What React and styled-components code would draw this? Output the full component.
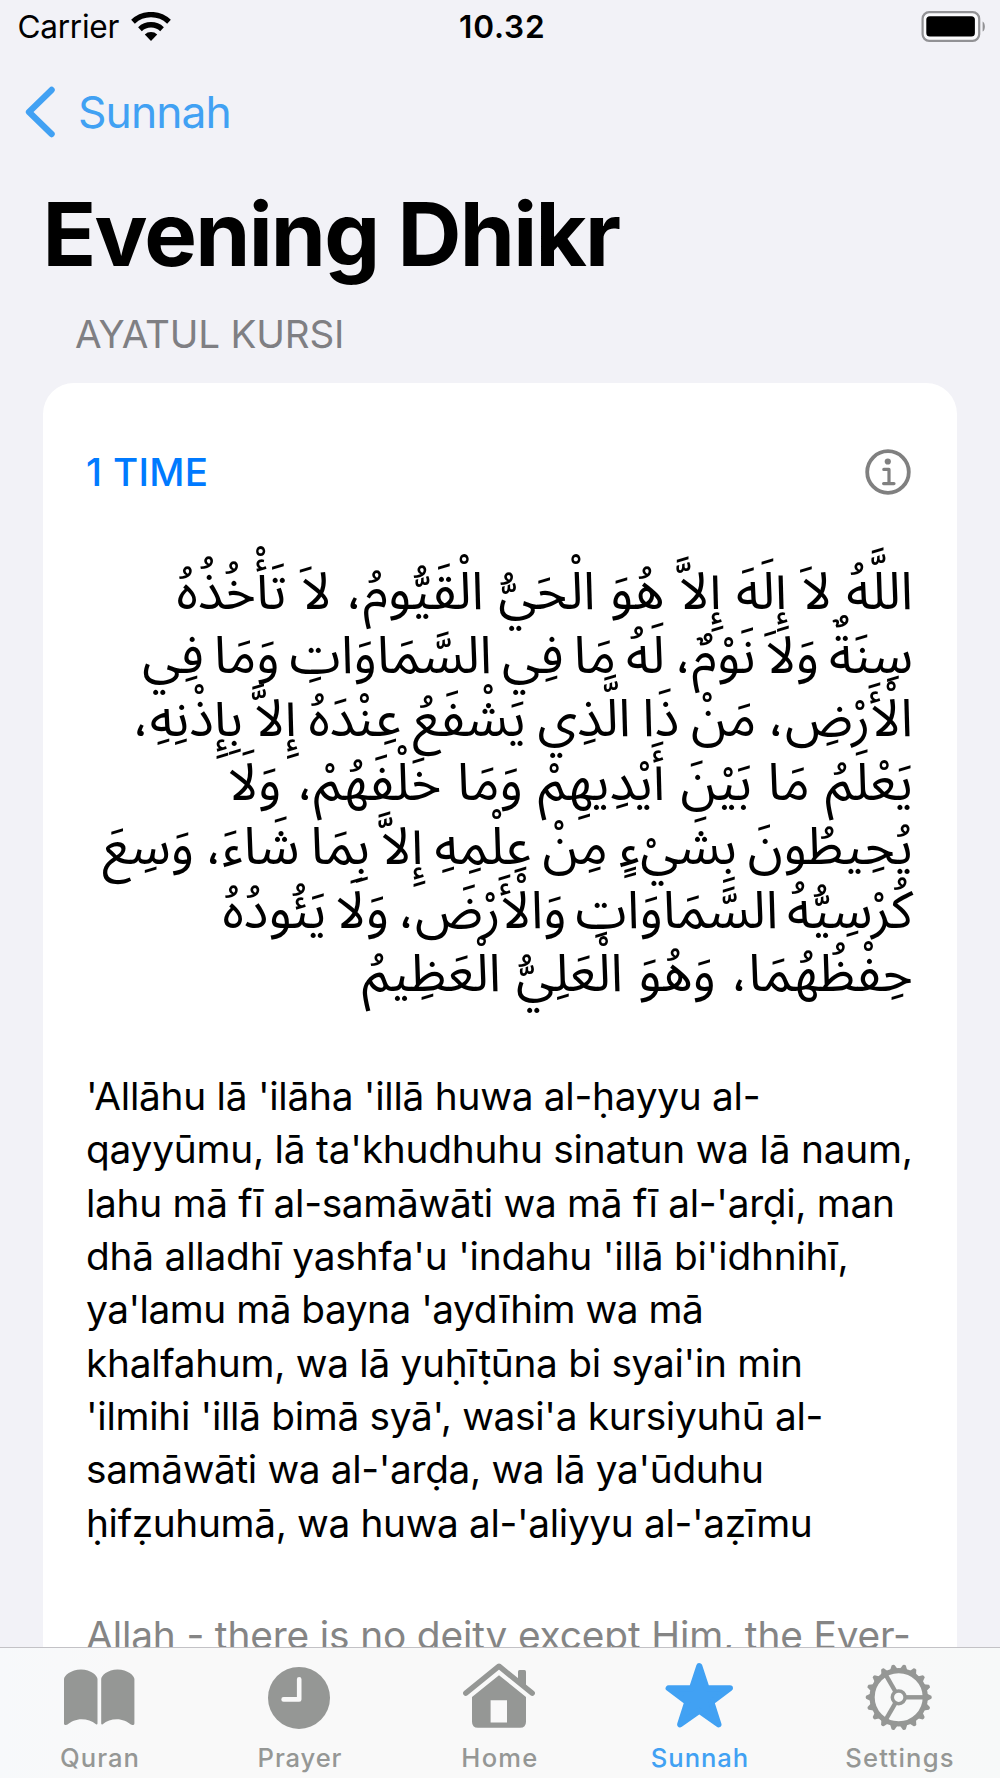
import React, { useLayoutEffect, useRef, useState } from "react";
import styled, { createGlobalStyle } from "styled-components";

const GlobalStyle = createGlobalStyle`
  * { box-sizing: border-box; }
  body {
    margin: 0;
    background: #f2f2f7;
    font-family: Inter, "Liberation Sans", sans-serif;
    color: #000;
  }
`;

const Screen = styled.div`
  display: flex;
  flex-direction: column;
  width: 1000px;
  height: 1778px;
  overflow: hidden;
  background: #f2f2f7;
`;

const StatusBar = styled.header`
  display: grid;
  grid-template-columns: 1fr auto 1fr;
  align-items: center;
  flex: none;
  height: 53px;
  padding: 0 13px 0 17.5px;
`;

const StatusLeft = styled.div`
  display: flex;
  align-items: center;
  gap: 12px;
`;

const StatusRight = styled.div`
  display: flex;
  justify-content: flex-end;
`;

const StatusText = styled.span`
  font-size: 31.6px;
  line-height: 38px;
  font-weight: ${(p) => (p.$strong ? 600 : 400)};
  padding-top: 1px;
`;

const BackLink = styled.a`
  display: flex;
  align-items: center;
  flex: none;
  gap: 22px;
  height: 117px;
  padding-left: 24px;
  color: #41a1f3;
  font-size: 44.4px;
`;

const Title = styled.h1`
  flex: none;
  margin: 0;
  padding-left: 42.5px;
  height: 131px;
  font-size: 88.6px;
  line-height: 128px;
  font-weight: 700;
`;

const SectionLabel = styled.h2`
  flex: none;
  margin: 0;
  padding-left: 75px;
  height: 82px;
  font-size: 38.6px;
  line-height: 66px;
  font-weight: 400;
  color: #7f7f83;
`;

const Content = styled.main`
  display: flex;
  flex-direction: column;
  flex: 1;
  min-height: 0;
  overflow: hidden;
`;

const Card = styled.section`
  flex: none;
  margin: 0 43px;
  padding: 62px 46px 60px 43px;
  border-radius: 31px;
  background: #fff;
`;

const CardHeader = styled.div`
  display: flex;
  align-items: center;
  justify-content: space-between;
  height: 53px;
`;

const Count = styled.span`
  font-size: 38.6px;
  font-weight: 500;
  color: #007aff;
`;

const ArabicVerse = styled.div`
  direction: rtl;
  margin: 63px -2px 0 0;
  font-family: "Noto Sans Arabic", "DejaVu Sans", sans-serif;
  font-size: 52px;
  line-height: 63.7px;
`;

const Paragraph = styled.div`
  margin-top: ${(p) => p.$gap}px;
  font-size: 38.8px;
  line-height: 53.33px;
  color: ${(p) => (p.$muted ? "#858585" : "#000")};
`;

const Line = styled.div`
  width: max-content;
  white-space: pre;
`;

const TabBar = styled.nav`
  display: grid;
  grid-template-columns: repeat(5, 1fr);
  flex: none;
  height: 131.5px;
  border-top: 1.5px solid #c3c2c6;
  background: linear-gradient(90deg, #f7f9fb 0%, #f9f9f9 12%, #f9f9f9 80%, #f7f9f9 100%);
`;

const Tab = styled.a`
  display: flex;
  flex-direction: column;
  align-items: center;
  padding-top: 10px;
  color: ${(p) => (p.$active ? "#41a1f3" : "#959795")};
`;

const TabIcon = styled.svg`
  display: block;
  width: 80px;
  height: 76px;
`;

const TabLabel = styled.span`
  margin-top: 8px;
  font-size: 25.6px;
  line-height: 32px;
  font-weight: 500;
`;

const Glyph = styled.svg`
  display: block;
  flex: none;
`;

/* Tracks a single line of text so that its ink spans exactly `ink` pixels. */
function Fit({ text, ink, as = "span" }) {
  const ref = useRef(null);
  const [style, setStyle] = useState(undefined);
  useLayoutEffect(() => {
    const cs = getComputedStyle(ref.current);
    const ctx = document.createElement("canvas").getContext("2d");
    ctx.font = `${cs.fontWeight} ${cs.fontSize} ${cs.fontFamily}`;
    ctx.direction = cs.direction;
    ctx.textAlign = "left";
    const m = ctx.measureText(text);
    const extra = ink - (m.actualBoundingBoxLeft + m.actualBoundingBoxRight);
    if (cs.direction === "rtl") {
      setStyle({ wordSpacing: `${extra / (text.split(" ").length - 1)}px` });
    } else {
      setStyle({ letterSpacing: `${extra / (text.length - 1)}px` });
    }
  }, [text, ink]);
  return (
    <Line as={as === "span" ? "span" : undefined} ref={ref} style={style}>
      {text}
    </Line>
  );
}

const arabic = [
  ["اللَّهُ لاَ إِلَهَ إِلاَّ هُوَ الْحَيُّ الْقَيُّومُ، لاَ تَأْخُذُهُ", 732],
  ["سِنَةٌ وَلاَ نَوْمٌ، لَهُ مَا فِي السَّمَاوَاتِ وَمَا فِي", 768],
  ["الْأَرْضِ، مَنْ ذَا الَّذِي يَشْفَعُ عِنْدَهُ إِلاَّ بِإِذْنِهِ،", 773],
  ["يَعْلَمُ مَا بَيْنَ أَيْدِيهِمْ وَمَا خَلْفَهُمْ، وَلَا", 681],
  ["يُحِيطُونَ بِشَيْءٍ مِنْ عِلْمِهِ إِلاَّ بِمَا شَاءَ، وَسِعَ", 808],
  ["كُرْسِيُّهُ السَّمَاوَاتِ وَالْأَرْضَ، وَلَا يَئُودُهُ", 690],
  ["حِفْظُهُمَا، وَهُوَ الْعَلِيُّ الْعَظِيمُ", 549],
];

const latin = [
  ["'Allāhu lā 'ilāha 'illā huwa al-ḥayyu al-", 669.7],
  ["qayyūmu, lā ta'khudhuhu sinatun wa lā naum,", 822.7],
  ["lahu mā fī al-samāwāti wa mā fī al-'arḍi, man", 804],
  ["dhā alladhī yashfa'u 'indahu 'illā bi'idhnihī,", 758.5],
  ["ya'lamu mā bayna 'aydīhim wa mā", 614],
  ["khalfahum, wa lā yuḥīṭūna bi syai'in min", 712],
  ["'ilmihi 'illā bimā syā', wasi'a kursiyuhū al-", 732.5],
  ["samāwāti wa al-'arḍa, wa lā ya'ūduhu", 673],
  ["ḥifẓuhumā, wa huwa al-'aliyyu al-'aẓīmu", 721.8],
];

const arc = (r) => {
  const dx = r * 0.682;
  const dy = r * 0.731;
  return `M${20 - dx} ${29 - dy}A${r} ${r} 0 0 1 ${20 + dx} ${29 - dy}`;
};

const WifiIcon = () => (
  <Glyph width="40" height="30" viewBox="0 0 40 30" fill="none" stroke="#000" strokeWidth="5.4">
    <path d={arc(26.4)} />
    <path d={arc(16.2)} />
    <path d="M20 29L13.8 22.6A9 9 0 0 1 26.2 22.6Z" fill="#000" stroke="none" />
  </Glyph>
);

const BatteryIcon = () => (
  <Glyph width="66" height="32" viewBox="0 0 66 32">
    <rect x="1.6" y="1.2" width="56.6" height="28.6" rx="6.5" fill="#fafafc" stroke="#929295" strokeWidth="2.2" />
    <rect x="5.3" y="5.2" width="48.6" height="20.4" rx="3.6" />
    <path d="M61.6 10.4C64.6 11.6 64.6 19.4 61.6 20.6Z" fill="#929295" />
  </Glyph>
);

const ChevronIcon = () => (
  <Glyph width="32" height="54" viewBox="0 0 32 54" fill="none" stroke="currentColor" strokeWidth="6.3" strokeLinecap="round" strokeLinejoin="round">
    <path d="M27.6 4.9L5 27L27.6 49.1" />
  </Glyph>
);

const InfoIcon = () => (
  <Glyph width="46" height="46" viewBox="0 0 46 46" fill="none" stroke="#808080" strokeWidth="3.8">
    <circle cx="23" cy="23" r="20.8" />
    <circle cx="22.8" cy="12.5" r="3.1" fill="#808080" stroke="none" />
    <path d="M18.8 20.4H24V34.6M18.6 34.6H29" strokeWidth="3.2" strokeLinecap="round" strokeLinejoin="round" />
  </Glyph>
);

const BookIcon = () => (
  <TabIcon viewBox="0 0 80 76" fill="currentColor">
    <path d="M4 21C4 18 11 11.6 21 11.6S37.5 18 37.5 21V65.5C37.5 66.5 36.6 66.8 36 66.2C32 63 27 61.2 21.5 61.2C16 61.2 11 63.5 7.5 66.6C6 67.6 4 67 4 65.5Z" />
    <path d="M41.2 21C41.2 18 47.6 11.6 57.6 11.6S74.4 18 74.4 21V65.5C74.4 67 72.4 67.6 70.9 66.6C67.4 63.5 62.4 61.2 56.9 61.2C51.4 61.2 46.6 63 42.7 66.2C42.1 66.8 41.2 66.5 41.2 65.5Z" />
  </TabIcon>
);

const ClockIcon = () => (
  <TabIcon viewBox="0 0 80 76">
    <circle cx="39" cy="39.9" r="31" fill="currentColor" />
    <path d="M39.2 21.2V41.4H23.6" fill="none" stroke="#f9f9f9" strokeWidth="4.6" strokeLinecap="round" strokeLinejoin="round" />
  </TabIcon>
);

const HomeIcon = () => (
  <TabIcon viewBox="0 0 80 76" fill="currentColor">
    <path d="M5.8 35.2L39 8.2L72.2 35.2" fill="none" stroke="currentColor" strokeWidth="5.4" strokeLinecap="round" strokeLinejoin="round" />
    <path d="M58 24V13.5Q58 12 59.5 12H64.5Q66 12 66 13.5V30Z" />
    <path fillRule="evenodd" d="M12 39L39 17.2L66 39V63.7Q66 69.7 60 69.7H18Q12 69.7 12 63.7ZM30.6 42.2V64.6H47V42.2Z" />
  </TabIcon>
);

const StarIcon = () => (
  <TabIcon viewBox="0 0 80 76" fill="currentColor" stroke="currentColor" strokeWidth="6" strokeLinejoin="round">
    <path d="M39.3 8L46.6 30.2H70L51.4 44.2L58.5 66.4L39.3 52.8L20.1 66.4L27.2 44.2L8.6 30.2H32Z" />
  </TabIcon>
);

const GearIcon = () => (
  <TabIcon viewBox="0 0 80 76">
    <g transform="translate(38.7 39.3)" fill="none" stroke="currentColor">
      <circle r="26.6" strokeWidth="5.2" />
      <circle r="6.4" strokeWidth="3.5" />
      {[0, 120, 240].map((a) => (
        <path key={a} d="M7 0H25" strokeWidth="4.4" transform={`rotate(${a})`} />
      ))}
      {Array.from({ length: 18 }, (_, i) => (
        <path key={i} d="M28 -3.8L32.6 -1.5Q33.6 0 32.6 1.5L28 3.8Z" fill="currentColor" stroke="none" transform={`rotate(${i * 20})`} />
      ))}
    </g>
  </TabIcon>
);

const tabs = [
  { label: "Quran", Icon: BookIcon, ink: 76.5 },
  { label: "Prayer", Icon: ClockIcon, ink: 82 },
  { label: "Home", Icon: HomeIcon, ink: 73 },
  { label: "Sunnah", Icon: StarIcon, ink: 95, active: true },
  { label: "Settings", Icon: GearIcon, ink: 106.5 },
];

export default function App() {
  return (
    <>
      <GlobalStyle />
      <Screen>
        <StatusBar>
          <StatusLeft>
            <StatusText><Fit text="Carrier" ink={101} /></StatusText>
            <WifiIcon />
          </StatusLeft>
          <StatusText $strong><Fit text="10.32" ink={83} /></StatusText>
          <StatusRight><BatteryIcon /></StatusRight>
        </StatusBar>
        <Content>
          <BackLink>
            <ChevronIcon />
            <Fit text="Sunnah" ink={148.5} />
          </BackLink>
          <Title><Fit text="Evening Dhikr" ink={572.5} /></Title>
          <SectionLabel><Fit text="AYATUL KURSI" ink={266} /></SectionLabel>
          <Card>
            <CardHeader>
              <Count><Fit text="1 TIME" ink={118.7} /></Count>
              <InfoIcon />
            </CardHeader>
            <ArabicVerse lang="ar">
              {arabic.map(([t, w]) => <Fit key={t} as="div" text={t} ink={w} />)}
            </ArabicVerse>
            <Paragraph $gap={62}>
              {latin.map(([t, w]) => <Fit key={t} as="div" text={t} ink={w} />)}
            </Paragraph>
            <Paragraph $gap={59} $muted>
              <Fit as="div" text="Allah - there is no deity except Him, the Ever-" ink={823} />
            </Paragraph>
          </Card>
        </Content>
        <TabBar>
          {tabs.map(({ label, Icon, ink, active }) => (
            <Tab key={label} $active={active}>
              <Icon />
              <TabLabel><Fit text={label} ink={ink} /></TabLabel>
            </Tab>
          ))}
        </TabBar>
      </Screen>
    </>
  );
}
